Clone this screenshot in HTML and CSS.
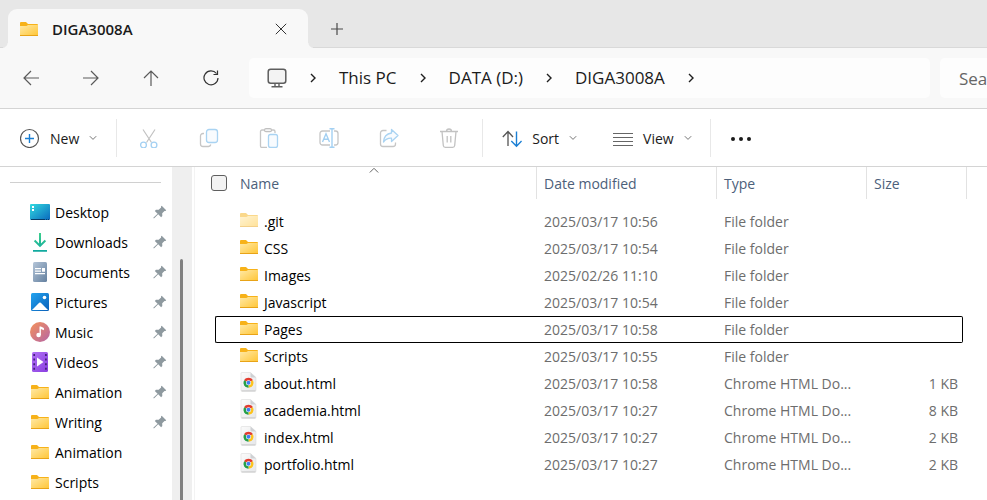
FILE: index.html
```html
<!DOCTYPE html>
<html lang="en">
<head>
<meta charset="utf-8">
<meta name="viewport" content="width=device-width, initial-scale=1">
<title>DIGA3008A</title>
<link rel="stylesheet" href="styles.css">
</head>
<body>
<svg class="sprite" aria-hidden="true">
  <defs>
    <linearGradient id="g-folder" x1="0" y1="0" x2="1" y2="1"><stop offset="0" stop-color="#ffe9a6"/><stop offset="1" stop-color="#ffc534"/></linearGradient>
    <linearGradient id="g-desktop" x1="0" y1="0" x2="1" y2="1"><stop offset="0" stop-color="#32dbe0"/><stop offset="1" stop-color="#0a68bd"/></linearGradient>
    <linearGradient id="g-down" x1="0" y1="0" x2="0" y2="1"><stop offset="0" stop-color="#3ccf8c"/><stop offset="1" stop-color="#0fa8a0"/></linearGradient>
    <linearGradient id="g-doc" x1="0" y1="0" x2="1" y2="1"><stop offset="0" stop-color="#b4c5d8"/><stop offset="1" stop-color="#64809f"/></linearGradient>
    <linearGradient id="g-pic" x1="0" y1="0" x2="1" y2="1"><stop offset="0" stop-color="#23a4f0"/><stop offset="1" stop-color="#0a5fb8"/></linearGradient>
    <linearGradient id="g-music" x1="0" y1="0" x2="1" y2="1"><stop offset="0" stop-color="#f5925a"/><stop offset="1" stop-color="#b565a5"/></linearGradient>
    <linearGradient id="g-video" x1="0" y1="0" x2="1" y2="1"><stop offset="0" stop-color="#b070f5"/><stop offset="1" stop-color="#8a3fe0"/></linearGradient>
    <linearGradient id="g-page" x1="0" y1="0" x2="1" y2="1"><stop offset="0" stop-color="#fbfbfb"/><stop offset="1" stop-color="#e6e7e9"/></linearGradient>
  </defs>
  <symbol id="i-folder" viewBox="0 0 20 20">
    <path d="M1 4a1 1 0 0 1 1-1h5l2 2h9a1 1 0 0 1 1 1v3H1z" fill="#f7b219"/>
    <path d="M1 7h6.500l1.500-1H19v11H1z" fill="url(#g-folder)"/>
    <path d="M1 16h18v1H1z" fill="#e8a317"/>
  </symbol>
  <symbol id="i-desktop" viewBox="0 0 20 20">
    <rect x="0" y="2" width="20" height="16" rx="1" fill="url(#g-desktop)"/>
    <path d="M1 17h14v1H1zM16 17h1v1h-1zM18 17h1v1h-1z" fill="#083b66"/>
    <path d="M2 4h2v2H2zM2 7h2v2H2z" fill="#fff"/>
  </symbol>
  <symbol id="i-downloads" viewBox="0 0 20 20">
    <path d="M9 1h2v10.500l3.700-3.700 1.400 1.400L10 15.300 3.900 9.200l1.400-1.400L9 11.500zM3 18h14v1.800H3z" fill="url(#g-down)"/>
  </symbol>
  <symbol id="i-documents" viewBox="0 0 20 20">
    <rect x="3" y="0" width="14" height="20" rx="1.500" fill="url(#g-doc)"/>
    <path d="M5 6h6v1.300H5zM5 8.500h6v1.300H5zM12 6h3v3.800h-3zM5 11h10v1.300H5z" fill="#fff"/>
  </symbol>
  <symbol id="i-pictures" viewBox="0 0 20 20">
    <rect x="1" y="1" width="18" height="18" rx="1.500" fill="url(#g-pic)"/>
    <path d="M2 18l7.200-7.200q.8-.7 1.600 0L18 18z" fill="#fff"/><circle cx="14.500" cy="5.500" r="1.800" fill="#fff"/>
  </symbol>
  <symbol id="i-music" viewBox="0 0 20 20">
    <circle cx="10" cy="10" r="10" fill="url(#g-music)"/>
    <circle cx="8.600" cy="13" r="2.300" fill="#fff"/><path d="M9.500 4.500h1.400l3 1.500v2.300l-3-1.400V13H9.500z" fill="#fff"/>
  </symbol>
  <symbol id="i-videos" viewBox="0 0 20 20">
    <rect x="2" y="0" width="16" height="20" rx="1.500" fill="url(#g-video)"/>
    <path d="M4.200 2v16M15.900 2v16" stroke="#43217a" stroke-width="1.700" stroke-dasharray="2 2.600" fill="none"/>
    <path d="M7 5.500v9l6.500-4.500z" fill="#fff"/>
  </symbol>
  <symbol id="i-html" viewBox="0 0 20 20">
    <path d="M2 1.500a1 1 0 0 1 1-1h8.500l5.500 5V18a1 1 0 0 1-1 1H3a1 1 0 0 1-1-1z" fill="url(#g-page)" stroke="#dcdcdc" stroke-width=".6"/>
    <path d="M11.500 .5l5.500 5h-4.500a1 1 0 0 1-1-1z" fill="#cfd1d4"/>
    <path d="M2.500 19h14" stroke="#bdbdbd" stroke-width=".8"/>
    <path d="M9.500 10.700L5.170 8.200A5 5 0 0 1 13.830 8.200z" fill="#e33b2e"/>
    <path d="M9.500 10.700L13.830 8.200A5 5 0 0 1 9.500 15.700z" fill="#fcc31e"/>
    <path d="M9.500 10.700L9.500 15.700A5 5 0 0 1 5.170 8.200z" fill="#259f49"/>
    <circle cx="9.500" cy="10.700" r="2.500" fill="#fff"/><circle cx="9.500" cy="10.700" r="2" fill="#3f7df0"/>
  </symbol>
  <symbol id="i-pin" viewBox="0 0 14 14">
    <path d="M8.700.8L13.200 5.300 12.500 6l-1-.1-2.300 2.400.1 2.700-1.200 1.200-2.900-2.900L1.200 13.200l-.8.100.1-.8L4.600 8.700 1.800 5.900 3 4.700l2.700.1L8.100 2.500 8 1.500z" fill="#8e999f"/>
  </symbol>
  <symbol id="i-right" viewBox="0 0 8 12"><path d="M2 2l4 4-4 4" fill="none" stroke="#1f1f1f" stroke-width="1.400"/></symbol>
  <symbol id="i-chev" viewBox="0 0 8 6"><path d="M.8 1.200L4 4.400l3.200-3.200" fill="none" stroke="#757575"/></symbol>
</svg>

<header class="tabs">
  <div class="tab">
    <svg class="ico"><use href="#i-folder"/></svg>
    <span class="tab-title">DIGA3008A</span>
    <button class="plain" aria-label="Close tab"><svg width="12" height="12" viewBox="0 0 12 12"><path d="M.8.8l10.400 10.400M11.200.8L.8 11.200" fill="none" stroke="#333"/></svg></button>
  </div>
  <button class="plain add" aria-label="New tab"><svg width="12" height="12" viewBox="0 0 12 12"><path d="M6 0v12M0 6h12" fill="none" stroke="#4a4a4a" stroke-width="1.200"/></svg></button>
</header>

<nav class="nav" aria-label="Location">
  <button class="plain slot" aria-label="Back"><svg width="16" height="16" viewBox="0 0 16 16"><path d="M16 8H1M8 1L1 8l7 7" fill="none" stroke="#5a5a5a" stroke-width="1.200"/></svg></button>
  <button class="plain slot" aria-label="Forward"><svg width="16" height="16" viewBox="0 0 16 16"><path d="M0 8h15M8 1l7 7-7 7" fill="none" stroke="#5a5a5a" stroke-width="1.200"/></svg></button>
  <button class="plain slot" aria-label="Up"><svg width="16" height="16" viewBox="0 0 16 16"><path d="M8 16V1M1 8l7-7 7 7" fill="none" stroke="#5a5a5a" stroke-width="1.200"/></svg></button>
  <button class="plain slot" aria-label="Refresh"><svg width="16" height="16" viewBox="0 0 16 16"><path d="M13.500 3.500A7 7 0 1 0 15 8M14.500.5v4h-4" fill="none" stroke="#333" stroke-width="1.200"/></svg></button>
  <div class="address">
    <svg width="20" height="20" viewBox="0 0 20 20"><rect x="1.200" y="1.200" width="17.600" height="14" rx="2.500" fill="#f3f3f3" stroke="#5e5e5e" stroke-width="1.500"/><path d="M8 15.500v3M12 15.500v3M4.500 18.700h11" fill="none" stroke="#5e5e5e" stroke-width="1.400"/></svg>
    <svg class="sep-arrow"><use href="#i-right"/></svg>
    <a href="#">This PC</a>
    <svg class="sep-arrow"><use href="#i-right"/></svg>
    <a href="#">DATA (D:)</a>
    <svg class="sep-arrow"><use href="#i-right"/></svg>
    <a href="#">DIGA3008A</a>
    <svg class="sep-arrow"><use href="#i-right"/></svg>
  </div>
  <input class="search" type="text" placeholder="Search" aria-label="Search">
</nav>

<div class="toolbar">
  <button class="plain cmd cmd-new"><svg width="20" height="20" viewBox="0 0 20 20"><circle cx="9.500" cy="10.500" r="9" fill="none" stroke="#555" stroke-width="1.200"/><path d="M9.500 6v9M5 10.500h9" fill="none" stroke="#1a7fd4" stroke-width="1.400"/></svg><span>New</span><svg class="chev"><use href="#i-chev"/></svg></button>
  <span class="rule"></span>
  <div class="edits">
    <button class="plain slot" aria-label="Cut"><svg width="20" height="20" viewBox="0 0 20 20"><path d="M4 1.500l8.500 13M16 1.500l-8.500 13" fill="none" stroke="#c2c2c2" stroke-width="1.200"/><circle cx="4.500" cy="17" r="2.900" fill="#fff" stroke="#a3d0f2" stroke-width="1.300"/><circle cx="15" cy="17" r="2.900" fill="#fff" stroke="#a3d0f2" stroke-width="1.300"/></svg></button>
    <button class="plain slot" aria-label="Copy"><svg width="20" height="20" viewBox="0 0 20 20"><path d="M5 5.500H4A2.500 2.500 0 0 0 1.500 8v8A2.500 2.500 0 0 0 4 18.500h5.500a2.500 2.500 0 0 0 2.300-2" fill="none" stroke="#c6c6c6" stroke-width="1.300"/><rect x="7.500" y="1.500" width="11" height="13" rx="2.500" fill="#f8fbfe" stroke="#a9d3f2" stroke-width="1.300"/></svg></button>
    <button class="plain slot" aria-label="Paste"><svg width="20" height="20" viewBox="0 0 20 20"><path d="M5.500 2H3a1.500 1.500 0 0 0-1.500 1.500V18A1.500 1.500 0 0 0 3 19.500h5M12.500 2h2A1.500 1.500 0 0 1 16 3.500V5" fill="none" stroke="#c6c6c6" stroke-width="1.300"/><rect x="5.500" y=".7" width="7" height="3" rx="1.500" fill="#f5f5f5" stroke="#c0c0c0" stroke-width="1.200"/><rect x="9.500" y="6.500" width="9" height="13" rx="2" fill="#f8fbfe" stroke="#a9d3f2" stroke-width="1.300"/></svg></button>
    <button class="plain slot" aria-label="Rename"><svg width="20" height="20" viewBox="0 0 20 20"><path d="M11 3H3.500A2.500 2.500 0 0 0 1 5.500v9A2.500 2.500 0 0 0 3.500 17H11M15 3h1.500A2.500 2.500 0 0 1 19 5.500v9a2.500 2.500 0 0 1-2.500 2.500H15" fill="none" stroke="#c6c6c6" stroke-width="1.300"/><path d="M3.500 14L7 5.800 10.500 14M4.800 11.300h4.400M13 .7v18.600M10.500.7h5M10.500 19.300h5" fill="none" stroke="#a3d0f2" stroke-width="1.400"/></svg></button>
    <button class="plain slot" aria-label="Share"><svg width="20" height="20" viewBox="0 0 20 20"><path d="M7.500 2.500H4A2.500 2.500 0 0 0 1.500 5v11A2.500 2.500 0 0 0 4 18.500h10a2.500 2.500 0 0 0 2.500-2.500v-1.500" fill="none" stroke="#c6c6c6" stroke-width="1.300"/><path d="M12.500 1.500l6.500 6-6.500 6v-3.300c-3.500-.2-6 1-8 3.800.3-4.700 3-8.300 8-9z" fill="#f8fbfe" stroke="#a9d3f2" stroke-width="1.300" stroke-linejoin="round"/></svg></button>
    <button class="plain slot" aria-label="Delete"><svg width="20" height="20" viewBox="0 0 20 20"><path d="M1 3.500h18M7.500 3.500a2.500 2.500 0 0 1 5 0M3 3.500l1.300 14A2 2 0 0 0 6.300 19.300h7.400a2 2 0 0 0 2-1.800L17 3.500M8.200 8v6.500M11.800 8v6.500" fill="none" stroke="#c2c2c2" stroke-width="1.300"/></svg></button>
  </div>
  <span class="rule"></span>
  <button class="plain cmd cmd-sort"><svg width="20" height="20" viewBox="0 0 20 20"><path d="M6 18V3.500M.8 9L6 3.500 11 9" fill="none" stroke="#555" stroke-width="1.300"/><path d="M14.500 3.500V18M9.300 13l5.200 5.200L19.600 13" fill="none" stroke="#1a7fd4" stroke-width="1.400"/></svg><span>Sort</span><svg class="chev"><use href="#i-chev"/></svg></button>
  <button class="plain cmd cmd-view"><svg width="20" height="20" viewBox="0 0 20 20"><path d="M0 5.500h20M0 9.500h20M0 13.500h20M0 17.500h20" fill="none" stroke="#666" stroke-width="1.200"/></svg><span>View</span><svg class="chev"><use href="#i-chev"/></svg></button>
  <span class="rule"></span>
  <button class="plain cmd cmd-more" aria-label="See more"><svg width="20" height="6" viewBox="0 0 20 6"><circle cx="2" cy="4" r="2" fill="#1b1b1b"/><circle cx="10" cy="4" r="2" fill="#1b1b1b"/><circle cx="18" cy="4" r="2" fill="#1b1b1b"/></svg></button>
</div>

<div class="body">
  <aside class="side">
    <ul class="places">
      <li><a href="#"><svg class="ico"><use href="#i-desktop"/></svg><span>Desktop</span><svg class="pin"><use href="#i-pin"/></svg></a></li>
      <li><a href="#"><svg class="ico"><use href="#i-downloads"/></svg><span>Downloads</span><svg class="pin"><use href="#i-pin"/></svg></a></li>
      <li><a href="#"><svg class="ico"><use href="#i-documents"/></svg><span>Documents</span><svg class="pin"><use href="#i-pin"/></svg></a></li>
      <li><a href="#"><svg class="ico"><use href="#i-pictures"/></svg><span>Pictures</span><svg class="pin"><use href="#i-pin"/></svg></a></li>
      <li><a href="#"><svg class="ico"><use href="#i-music"/></svg><span>Music</span><svg class="pin"><use href="#i-pin"/></svg></a></li>
      <li><a href="#"><svg class="ico"><use href="#i-videos"/></svg><span>Videos</span><svg class="pin"><use href="#i-pin"/></svg></a></li>
      <li><a href="#"><svg class="ico"><use href="#i-folder"/></svg><span>Animation</span><svg class="pin"><use href="#i-pin"/></svg></a></li>
      <li><a href="#"><svg class="ico"><use href="#i-folder"/></svg><span>Writing</span><svg class="pin"><use href="#i-pin"/></svg></a></li>
      <li><a href="#"><svg class="ico"><use href="#i-folder"/></svg><span>Animation</span></a></li>
      <li><a href="#"><svg class="ico"><use href="#i-folder"/></svg><span>Scripts</span></a></li>
    </ul>
  </aside>
  <div class="track"><div class="thumb"></div></div>
  <main class="files">
    <table>
      <colgroup><col class="c-edge"><col class="c-name"><col class="c-date"><col class="c-type"><col class="c-size"><col class="c-edge"></colgroup>
      <thead>
        <tr>
          <th colspan="2" class="h-name"><span class="head-name"><input type="checkbox" aria-label="Select all"><span class="label">Name</span></span><svg class="sorted" width="10" height="6" viewBox="0 0 10 6"><path d="M.8 5.500L5 1.300 9.200 5.500" fill="none" stroke="#666"/></svg></th>
          <th><span class="label">Date modified</span></th><th><span class="label">Type</span></th><th colspan="2"><span class="label">Size</span></th>
        </tr>
      </thead>
      <tbody>
        <tr><td></td><td class="name hidden-item"><span><svg class="ico"><use href="#i-folder"/></svg>.git</span></td><td>2025/03/17 10:56</td><td>File folder</td><td class="size"></td><td></td></tr>
        <tr><td></td><td class="name"><span><svg class="ico"><use href="#i-folder"/></svg>CSS</span></td><td>2025/03/17 10:54</td><td>File folder</td><td class="size"></td><td></td></tr>
        <tr><td></td><td class="name"><span><svg class="ico"><use href="#i-folder"/></svg>Images</span></td><td>2025/02/26 11:10</td><td>File folder</td><td class="size"></td><td></td></tr>
        <tr><td></td><td class="name"><span><svg class="ico"><use href="#i-folder"/></svg>Javascript</span></td><td>2025/03/17 10:54</td><td>File folder</td><td class="size"></td><td></td></tr>
        <tr class="focused"><td></td><td class="name"><span><svg class="ico"><use href="#i-folder"/></svg>Pages</span></td><td>2025/03/17 10:58</td><td>File folder</td><td class="size"></td><td></td></tr>
        <tr><td></td><td class="name"><span><svg class="ico"><use href="#i-folder"/></svg>Scripts</span></td><td>2025/03/17 10:55</td><td>File folder</td><td class="size"></td><td></td></tr>
        <tr><td></td><td class="name"><span><svg class="ico"><use href="#i-html"/></svg>about.html</span></td><td>2025/03/17 10:58</td><td>Chrome HTML Do...</td><td class="size">1 KB</td><td></td></tr>
        <tr><td></td><td class="name"><span><svg class="ico"><use href="#i-html"/></svg>academia.html</span></td><td>2025/03/17 10:27</td><td>Chrome HTML Do...</td><td class="size">8 KB</td><td></td></tr>
        <tr><td></td><td class="name"><span><svg class="ico"><use href="#i-html"/></svg>index.html</span></td><td>2025/03/17 10:27</td><td>Chrome HTML Do...</td><td class="size">2 KB</td><td></td></tr>
        <tr><td></td><td class="name"><span><svg class="ico"><use href="#i-html"/></svg>portfolio.html</span></td><td>2025/03/17 10:27</td><td>Chrome HTML Do...</td><td class="size">2 KB</td><td></td></tr>
      </tbody>
    </table>
  </main>
</div>
</body>
</html>
```

FILE: styles.css
```css
* { box-sizing: border-box; }

body {
  margin: 0;
  min-height: 100vh;
  display: flex;
  flex-direction: column;
  background: #fff;
  color: #1b1b1b;
  font: 14px/20px "Open Sans", "Noto Sans", sans-serif;
}

a { color: inherit; text-decoration: none; }
svg { display: block; flex: none; }
.sprite { position: absolute; width: 0; height: 0; }
.ico { width: 20px; height: 20px; }

.plain {
  display: flex;
  align-items: center;
  justify-content: center;
  padding: 0;
  border: 0;
  background: none;
  color: inherit;
  font: inherit;
}
.slot { flex: none; width: 60px; height: 40px; }

/* Tab strip */
.tabs {
  display: flex;
  height: 48px;
  padding: 9px 8px 0;
  background: #e7e7e7;
  box-shadow: inset 0 -1px #d9d9d9;
}
.tab {
  position: relative;
  display: flex;
  align-items: center;
  width: 300px;
  padding: 0 21px 0 11px;
  gap: 13px;
  border-radius: 9px 9px 0 0;
  background: #f8f8f8;
}
.tab::before,
.tab::after {
  content: "";
  position: absolute;
  bottom: 0;
  width: 5px;
  height: 5px;
}
.tab::before { right: 100%; background: radial-gradient(circle at 0 0, transparent 4px, #f8f8f8 5px); }
.tab::after { left: 100%; background: radial-gradient(circle at 100% 0, transparent 4px, #f8f8f8 5px); }
.tab-title { flex: 1; font-size: 15px; font-weight: 600; }
.add { width: 58px; }

/* Navigation */
.nav {
  display: flex;
  align-items: center;
  height: 61px;
  padding-left: 1px;
  border-bottom: 1px solid #d4d4d4;
  background: #f8f8f8;
  font-size: 17px;
}
.address {
  flex: 1;
  display: flex;
  align-items: center;
  gap: 22px;
  height: 40px;
  margin: 0 10px 0 8px;
  padding-left: 18px;
  border-radius: 5px;
  background: #fdfdfd;
  white-space: nowrap;
}
.sep-arrow { width: 8px; height: 12px; }
.search {
  width: 47px;
  height: 40px;
  padding: 0 0 0 19px;
  border: 0;
  border-radius: 5px 0 0 5px;
  background: #fdfdfd;
  font: inherit;
}
.search::placeholder { color: #666; }

/* Commands */
.toolbar {
  display: flex;
  align-items: center;
  height: 58px;
  border-bottom: 1px solid #d4d4d4;
}
.cmd { gap: 10px; height: 40px; }
.cmd span, .places span, .label { padding-top: 2px; }
.chev { width: 8px; height: 6px; }
.cmd-new { padding: 0 19px 0 20px; }
.cmd-sort { padding: 0 18px 0 19px; }
.cmd-view { padding: 0 18px; }
.cmd-more { padding: 0 20px; }
.edits { display: flex; padding: 0 3px 0 2px; }
.rule { flex: none; width: 1px; height: 38px; background: #e8e8e8; }

/* Sidebar */
.body { flex: 1; display: flex; }
.side { flex: none; width: 172px; padding: 15px 11px 0 10px; }
.places {
  margin: 0;
  padding: 14px 0 0;
  border-top: 1px solid #d0d0d0;
  list-style: none;
  color: #000;
}
.places a {
  display: flex;
  align-items: center;
  gap: 5px;
  height: 30px;
  margin-right: -6px;
  padding-left: 20px;
}
.places span { flex: 1; }
.pin { width: 14px; height: 14px; }
.track { flex: none; display: flex; width: 20px; padding: 92px 9px 0 8px; background: #efefef; }
.thumb { flex: 1; border-radius: 2px 2px 0 0; background: #808080; }

/* File list */
.files { flex: 1; margin-left: 2px; padding-left: 16px; border-left: 1px solid #f3f3f3; }
table { width: 756px; table-layout: fixed; border-collapse: separate; border-spacing: 0; }
.c-edge { width: 4px; }
.c-name { width: 322px; }
.c-date { width: 180px; }
.c-type { width: 150px; }
.c-size { width: 96px; }
th {
  height: 32px;
  padding: 0 7px;
  border-right: 1px solid #e2e2e2;
  color: #4c607a;
  font-weight: 400;
  text-align: left;
}
.label { display: block; }
.h-name { position: relative; padding: 0; }
.head-name { display: flex; align-items: center; gap: 13px; }
.sorted { position: absolute; left: 50%; top: 0; transform: translateX(-50%); }
input[type="checkbox"] {
  appearance: none;
  width: 16px;
  height: 16px;
  margin: 0;
  border: 1px solid #5f5f5f;
  border-radius: 3px;
  background: #f3f3f3;
}
td {
  height: 27px;
  padding: 0 7px;
  border: 0 solid #000;
  color: #6d6d6d;
  white-space: nowrap;
}
td:first-child, td:last-child { padding: 0; }
tbody::before { content: ""; display: block; height: 9px; }
.name { padding-left: 24px; color: #000; }
.name span { display: flex; align-items: center; gap: 5px; height: 20px; }
.name svg { margin-bottom: 4px; }
.size { padding-right: 5px; text-align: right; }
.hidden-item svg { opacity: .5; }
.focused td:not(:first-child):not(:last-child) { border-top-width: 1px; border-bottom-width: 1px; }
.focused .name { border-left-width: 1px; border-radius: 2px 0 0 2px; padding-left: 23px; }
.focused .size { border-right-width: 1px; border-radius: 0 2px 2px 0; }
```
